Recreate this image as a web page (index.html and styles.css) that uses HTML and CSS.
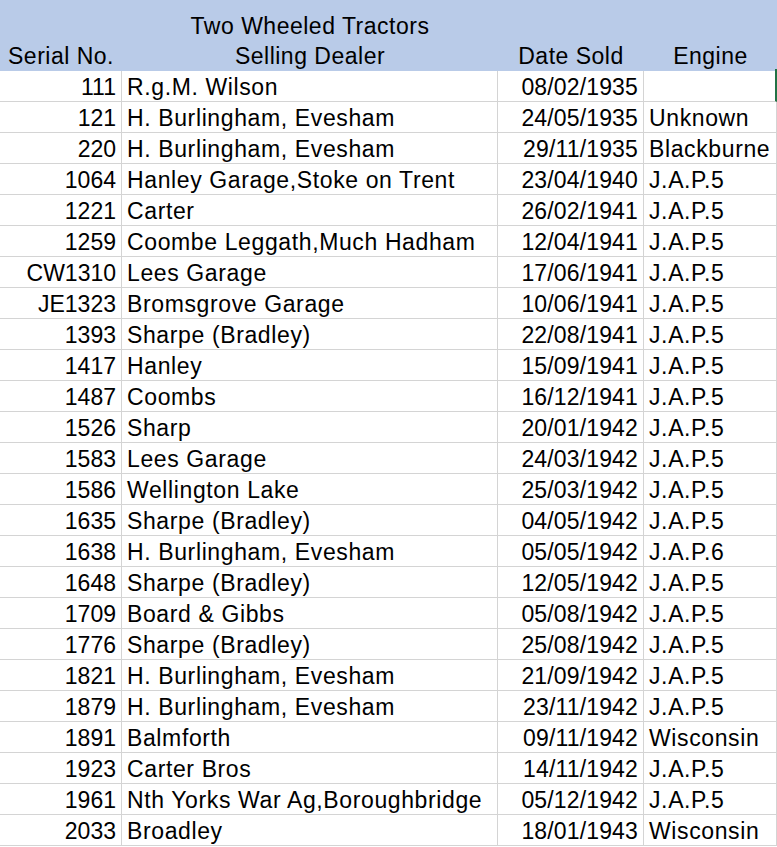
FILE: index.html
```html
<!DOCTYPE html>
<html>
<head>
<meta charset="utf-8">
<title>Two Wheeled Tractors</title>
<link rel="stylesheet" href="styles.css">
</head>
<body>
<div class="sheet">
  <div class="head">
    <div class="title">Two Wheeled Tractors</div>
    <div class="lbl">Serial No.</div>
    <div class="lbl">Selling Dealer</div>
    <div class="lbl">Date Sold</div>
    <div class="lbl">Engine</div>
  </div>
  <div class="grid">
    <div class="c num">111</div><div class="c txt">R.g.M. Wilson</div><div class="c date">08/02/1935</div><div class="c txt sel"></div>
    <div class="c num">121</div><div class="c txt">H. Burlingham, Evesham</div><div class="c date">24/05/1935</div><div class="c txt">Unknown</div>
    <div class="c num">220</div><div class="c txt">H. Burlingham, Evesham</div><div class="c date">29/11/1935</div><div class="c txt">Blackburne</div>
    <div class="c num">1064</div><div class="c txt">Hanley Garage,Stoke on Trent</div><div class="c date">23/04/1940</div><div class="c txt">J.A.P.5</div>
    <div class="c num">1221</div><div class="c txt">Carter</div><div class="c date">26/02/1941</div><div class="c txt">J.A.P.5</div>
    <div class="c num">1259</div><div class="c txt">Coombe Leggath,Much Hadham</div><div class="c date">12/04/1941</div><div class="c txt">J.A.P.5</div>
    <div class="c num">CW1310</div><div class="c txt">Lees Garage</div><div class="c date">17/06/1941</div><div class="c txt">J.A.P.5</div>
    <div class="c num">JE1323</div><div class="c txt">Bromsgrove Garage</div><div class="c date">10/06/1941</div><div class="c txt">J.A.P.5</div>
    <div class="c num">1393</div><div class="c txt">Sharpe (Bradley)</div><div class="c date">22/08/1941</div><div class="c txt">J.A.P.5</div>
    <div class="c num">1417</div><div class="c txt">Hanley</div><div class="c date">15/09/1941</div><div class="c txt">J.A.P.5</div>
    <div class="c num">1487</div><div class="c txt">Coombs</div><div class="c date">16/12/1941</div><div class="c txt">J.A.P.5</div>
    <div class="c num">1526</div><div class="c txt">Sharp</div><div class="c date">20/01/1942</div><div class="c txt">J.A.P.5</div>
    <div class="c num">1583</div><div class="c txt">Lees Garage</div><div class="c date">24/03/1942</div><div class="c txt">J.A.P.5</div>
    <div class="c num">1586</div><div class="c txt">Wellington Lake</div><div class="c date">25/03/1942</div><div class="c txt">J.A.P.5</div>
    <div class="c num">1635</div><div class="c txt">Sharpe (Bradley)</div><div class="c date">04/05/1942</div><div class="c txt">J.A.P.5</div>
    <div class="c num">1638</div><div class="c txt">H. Burlingham, Evesham</div><div class="c date">05/05/1942</div><div class="c txt">J.A.P.6</div>
    <div class="c num">1648</div><div class="c txt">Sharpe (Bradley)</div><div class="c date">12/05/1942</div><div class="c txt">J.A.P.5</div>
    <div class="c num">1709</div><div class="c txt">Board &amp; Gibbs</div><div class="c date">05/08/1942</div><div class="c txt">J.A.P.5</div>
    <div class="c num">1776</div><div class="c txt">Sharpe (Bradley)</div><div class="c date">25/08/1942</div><div class="c txt">J.A.P.5</div>
    <div class="c num">1821</div><div class="c txt">H. Burlingham, Evesham</div><div class="c date">21/09/1942</div><div class="c txt">J.A.P.5</div>
    <div class="c num">1879</div><div class="c txt">H. Burlingham, Evesham</div><div class="c date">23/11/1942</div><div class="c txt">J.A.P.5</div>
    <div class="c num">1891</div><div class="c txt">Balmforth</div><div class="c date">09/11/1942</div><div class="c txt">Wisconsin</div>
    <div class="c num">1923</div><div class="c txt">Carter Bros</div><div class="c date">14/11/1942</div><div class="c txt">J.A.P.5</div>
    <div class="c num">1961</div><div class="c txt">Nth Yorks War Ag,Boroughbridge</div><div class="c date">05/12/1942</div><div class="c txt">J.A.P.5</div>
    <div class="c num">2033</div><div class="c txt">Broadley</div><div class="c date">18/01/1943</div><div class="c txt">Wisconsin</div>
  </div>
</div>
</body>
</html>
```
FILE: styles.css
```css
html, body {
  margin: 0;
  padding: 0;
  background: #ffffff;
}
.sheet {
  width: 777px;
  font-family: "Liberation Sans", Arial, sans-serif;
  font-size: 23px;
  color: #000;
  overflow: hidden;
}
.head {
  background: #b9cbe8;
  height: 71px;
  box-sizing: border-box;
  padding-top: 11px;
  display: grid;
  grid-template-columns: 122px 376px 146px 1fr;
  grid-template-rows: 31px 29px;
}
.title {
  grid-column: 2;
  grid-row: 1;
  text-align: center;
  line-height: 31px;
  letter-spacing: 0.5px;
}
.lbl {
  grid-row: 2;
  text-align: center;
  line-height: 29px;
  letter-spacing: 0.5px;
}
.grid {
  display: grid;
  grid-template-columns: 122px 376px 146px 1fr;
  grid-auto-rows: 31px;
}
.c {
  box-sizing: border-box;
  border-right: 1px solid #d4d4d4;
  border-bottom: 1px solid #d4d4d4;
  padding-top: 2px;
  line-height: 28px;
  white-space: nowrap;
  overflow: hidden;
}
.num {
  text-align: right;
  padding-right: 5px;
  letter-spacing: 0;
}
.date {
  text-align: right;
  padding-right: 5px;
  letter-spacing: 0.15px;
}
.txt {
  padding-left: 5px;
  letter-spacing: 0.62px;
}
.sel {
  border-right: 2px solid #217346;
  margin-top: -2px;
  height: 33px;
}
```
